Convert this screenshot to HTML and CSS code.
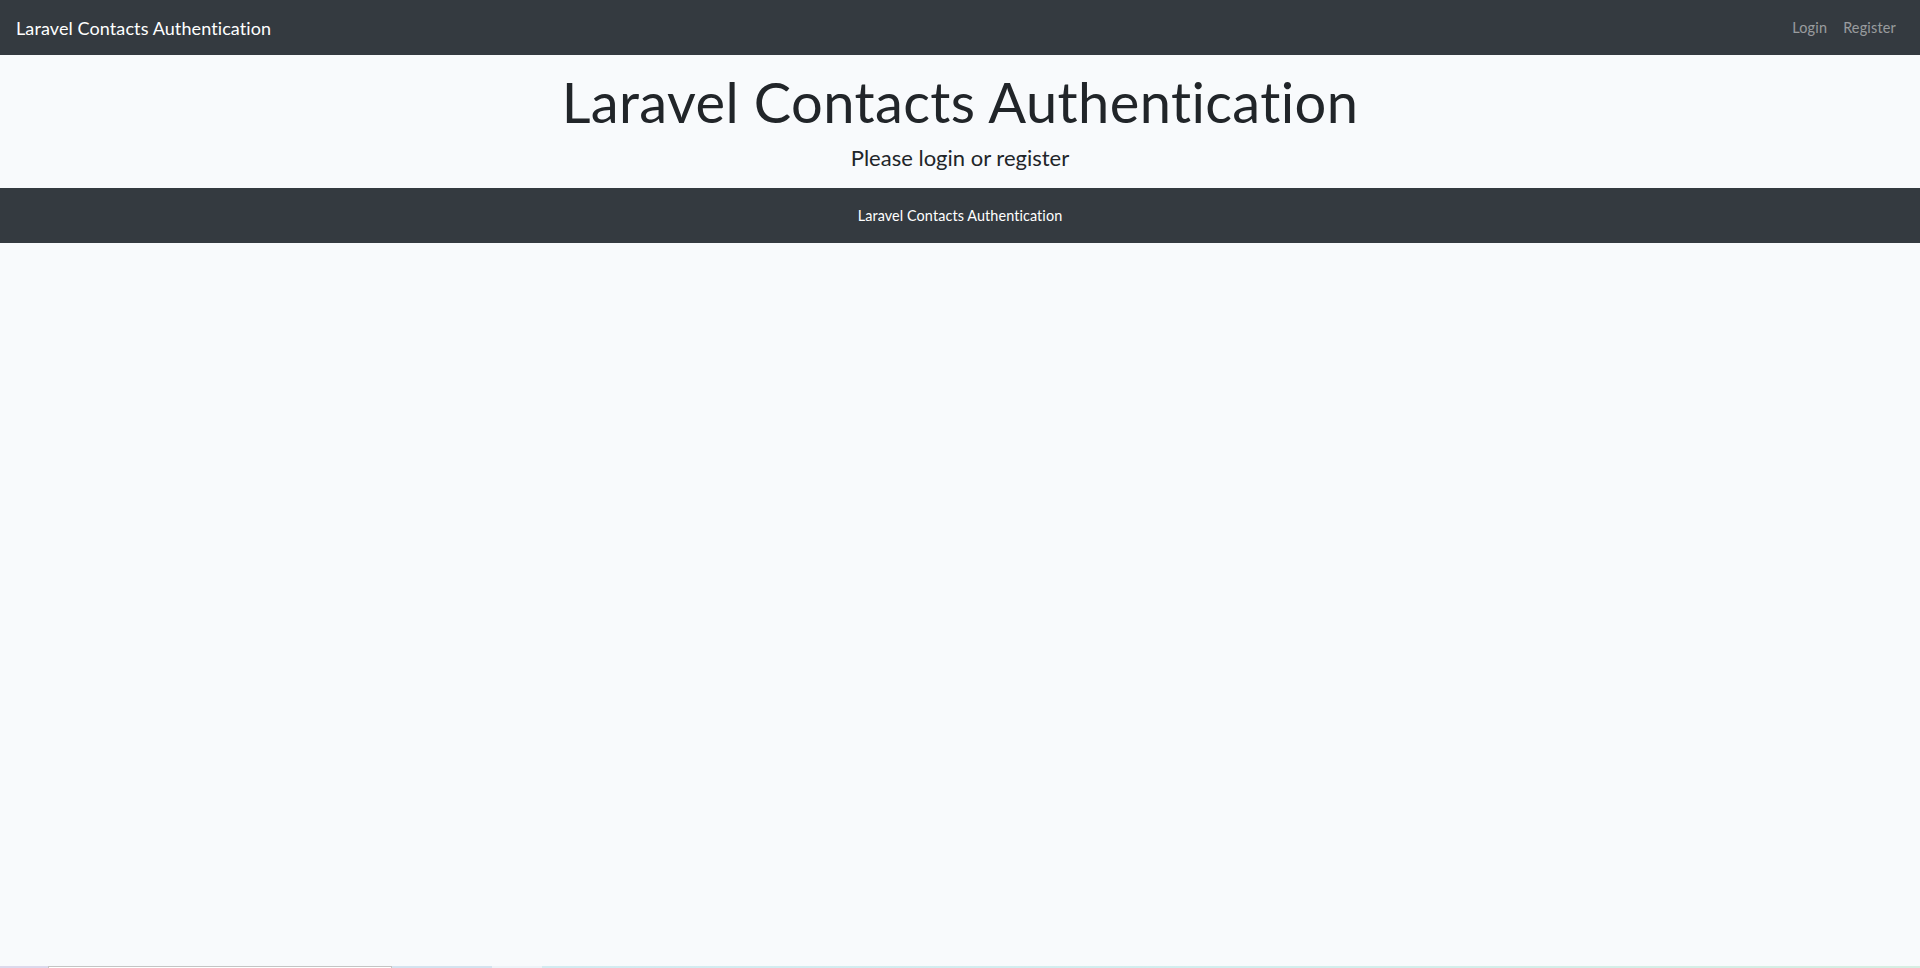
FILE: index.html
```html
<!DOCTYPE html>
<html lang="en">
<head>
<meta charset="utf-8">
<title>Laravel Contacts Authentication</title>
<link rel="stylesheet" href="styles.css">
</head>
<body>
<nav class="navbar">
  <a class="brand" href="#">Laravel Contacts Authentication</a>
  <ul class="nav-links">
    <li><a href="#">Login</a></li>
    <li><a href="#">Register</a></li>
  </ul>
</nav>
<header class="hero">
  <h1 class="hero-title">Laravel Contacts Authentication</h1>
  <p class="hero-lead">Please login or register</p>
</header>
<footer class="footer">
  <span class="footer-text">Laravel Contacts Authentication</span>
</footer>
<div class="taskbar">
  <span class="tb tb-a"></span>
  <span class="tb tb-b"></span>
  <span class="tb tb-c"></span>
  <span class="tb tb-d"></span>
  <span class="tb tb-e"></span>
</div>
</body>
</html>
```
FILE: styles.css
```css
* { box-sizing: border-box; }
html, body { margin: 0; padding: 0; }
body {
  background: #f8fafc;
  color: #212529;
  font-family: Lato, "Open Sans", sans-serif;
  font-size: 14.4px;
  min-height: 968px;
}
a { text-decoration: none; }

.navbar {
  height: 55px;
  background: #343a40;
  display: flex;
  align-items: center;
  justify-content: space-between;
  padding: 0 16px;
}
.brand {
  color: #ffffff;
  font-size: 18px;
  line-height: 1;
  padding-top: 1px;
  letter-spacing: 0.1px;
}
.nav-links {
  list-style: none;
  margin: 0;
  padding: 1px 0 0;
  display: flex;
}
.nav-links a {
  display: block;
  color: rgba(255, 255, 255, 0.5);
  font-size: 14.4px;
  padding: 0 8px;
  line-height: 1;
  letter-spacing: 0.2px;
}

.hero {
  height: 133px;
  text-align: center;
  padding-top: 13px;
}
.hero-title {
  margin: 0;
  font-size: 56px;
  font-weight: 400;
  line-height: 67px;
  letter-spacing: 0.4px;
}
.hero-lead {
  margin: 7px 0 0;
  font-size: 22px;
  font-weight: 400;
  line-height: 32px;
}

.footer {
  height: 55px;
  background: #343a40;
  display: flex;
  align-items: center;
  justify-content: center;
  padding-top: 1px;
}
.footer-text {
  color: #ffffff;
  font-size: 14.4px;
  line-height: 1;
  letter-spacing: 0.1px;
}

.taskbar {
  position: fixed;
  left: 0;
  right: 0;
  bottom: 0;
  height: 2px;
  display: flex;
}
.tb { display: block; height: 100%; }
.tb-a { width: 48px; background: #dcd9ec; }
.tb-b { width: 344px; background: #ffffff; border-top: 1px solid #c4c4c4; border-left: 1px solid #c4c4c4; border-right: 1px solid #c4c4c4; }
.tb-c { width: 100px; background: #d4e3ef; }
.tb-d { width: 50px; background: #edf3f8; }
.tb-e { flex: 1; background: linear-gradient(90deg, #d3ebf1 0%, #d2eeee 50%, #d6eee2 100%); }
```
